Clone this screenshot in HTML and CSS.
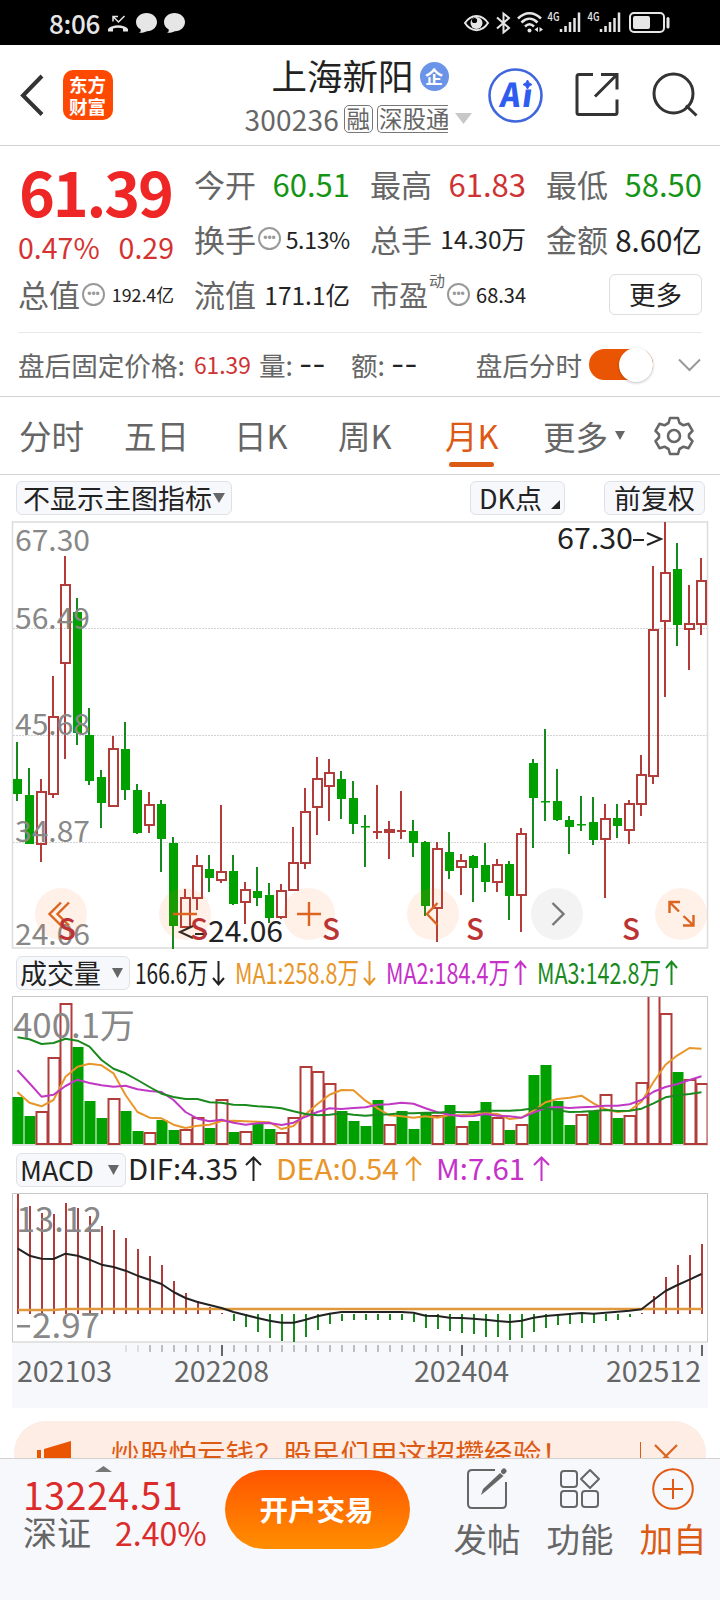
FILE: index.html
```html
<!DOCTYPE html>
<html lang="zh-CN">
	<head>
		<meta charset="utf-8">
		<meta name="viewport" content="width=device-width, initial-scale=1.0">
		<title>上海新阳 300236</title>
		<link rel="stylesheet" href="styles.css">
	</head>

	<body>
		<div class="status">
			<span class="clock">8:06</span>
			<svg class="st-left" width="80" height="24" viewBox="106 11 80 24">
				<path d="M108 31.500v-2.500c4-5 16-5 20 0v2.500h-5v-3c-3-1-7-1-10 0v3z" fill="#e6e6e6"/>
				<path d="M113 21.500v-5h5M113.500 17l5 5 6-6" fill="none" stroke="#e6e6e6" stroke-width="1.500"/>
				<path d="M146.500 13c6 0 10.500 4 10.500 9s-4 9-10 9.200c-2 .6-3.500 1.800-8 1.600 2-1 2-2 1.500-3.500-3-1.500-4.500-4.300-4.500-7.300 0-5 4.500-9 10.500-9z" fill="#e6e6e6"/>
				<path d="M174.500 13c6 0 10.500 4 10.500 9s-4 9-10 9.200c-2 .6-3.500 1.800-8 1.600 2-1 2-2 1.500-3.500-3-1.500-4.500-4.300-4.500-7.300 0-5 4.500-9 10.500-9z" fill="#e6e6e6"/>
			</svg>
			<svg class="st-right" width="208" height="32" viewBox="463 7 208 32">
				<g fill="none" stroke="#e6e6e6" stroke-width="2">
					<path d="M465 23c6-9.500 17-9.500 23 0-6 9.500-17 9.500-23 0z"/>
					<path d="M497 17.500l12 10.500-5.500 4.500V13.500l5.500 4.500-12 10.500"/>
					<path d="M518 18.500c7-7 16-7 23 0M521.500 22.500c5-5 11-5 16 0M525 26.500c3-3 6-3 9 0" stroke-width="2.500"/>
					<path d="M561 32v-3M565.500 32v-6M570 32v-10M574.500 32v-14M579 32V12.500M601 32v-3M605.500 32v-6M610 32v-10M614.500 32v-14M619 32V12.500" stroke-width="2.500"/>
					<rect x="630" y="13" width="34" height="19" rx="4"/>
					<path d="M668 18.500v8.500" stroke-width="3" stroke-linecap="round"/>
				</g>
				<circle cx="476.500" cy="23" r="6" fill="#e6e6e6"/>
				<circle cx="474.500" cy="20.500" r="2.600" fill="#000"/>
				<circle cx="529.500" cy="30.500" r="2" fill="#e6e6e6"/>
				<path d="M538 27v5l-3.500-2.500zM539.500 27v5l3.500-2.500z" fill="#e6e6e6"/>
				<rect x="633" y="16" width="17" height="13" rx="2" fill="#e6e6e6"/>
				<text class="net" x="547.500" y="20.500" textLength="12" lengthAdjust="spacingAndGlyphs">4G</text>
				<text class="net" x="587.500" y="20.500" textLength="12" lengthAdjust="spacingAndGlyphs">4G</text>
			</svg>
		</div>

		<header>
			<svg class="back" width="28" height="44" viewBox="0 0 28 44"><path d="M24 3L5 22.500l19 19" fill="none" stroke="#333" stroke-width="4"/></svg>
			<div class="logo"><span>东方</span><span>财富</span></div>
			<div class="title">
				<div class="name"><h1>上海新阳</h1><span class="corp">企</span></div>
				<div class="code">
					<span class="num">300236</span>
					<span class="tag">融</span>
					<span class="tag cut">深股通</span>
					<svg width="17" height="12" viewBox="0 0 17 12"><path d="M0 0h17l-8.500 11z" fill="#c8c8c8"/></svg>
				</div>
			</div>
			<svg class="ai" width="56" height="56" viewBox="488 67 56 56">
				<circle cx="515.500" cy="95.500" r="26" fill="#fff" stroke="#3f66dd" stroke-width="2.600"/>
				<g transform="translate(515 107) skewX(-8)">
					<text class="ai-text" x="-16" y="0" textLength="20" lengthAdjust="spacingAndGlyphs">A</text>
					<text class="ai-text" x="5.500" y="0" textLength="11" lengthAdjust="spacingAndGlyphs">ı</text>
				</g>
				<path d="M527.500 80q1 3.500 4.500 4.500-3.500 1-4.500 4.500-1-3.500-4.500-4.500 3.500-1 4.500-4.500z" fill="#2f5cf0" stroke="#2f5cf0"/>
			</svg>
			<svg class="share" width="46" height="46" viewBox="574 73 46 46" fill="none" stroke="#333" stroke-width="3">
				<path d="M593 75.500h-14q-2 0-2 2v36q0 2 2 2h36q2 0 2-2v-13"/>
				<path d="M601 75.500h16v15M616 76.500l-21 21"/>
			</svg>
			<svg class="search" width="48" height="48" viewBox="651 71 48 48" fill="none" stroke="#333" stroke-width="3">
				<circle cx="673.500" cy="93.500" r="19.500"/>
				<path d="M686 105.500l10.500 10"/>
			</svg>
		</header>

		<section class="quote">
			<div class="price">
				<b>61.39</b>
				<div><span>0.47%</span><span>0.29</span></div>
			</div>
			<div class="cell"><label>今开</label><span class="green v1">60.51</span></div>
			<div class="cell"><label>最高</label><span class="red v1">61.83</span></div>
			<div class="cell"><label>最低</label><span class="green v1">58.50</span></div>
			<div class="cell"><label>换手</label><i class="dots">•••</i><span class="v3">5.13%</span></div>
			<div class="cell"><label>总手</label><span class="v4">14.30万</span></div>
			<div class="cell"><label>金额</label><span class="v2">8.60亿</span></div>
			<div class="cell"><label>总值</label><i class="dots">•••</i><span class="v6">192.4亿</span></div>
			<div class="cell"><label>流值</label><span class="v4">171.1亿</span></div>
			<div class="cell pe"><label>市盈</label><sup>动</sup><i class="dots">•••</i><span class="v5">68.34</span></div>
			<div class="cell"><button class="more">更多</button></div>
		</section>

		<section class="after">
			<span>盘后固定价格:</span>
			<span class="red fixed">61.39</span>
			<span class="vol">量:</span><span class="dash">--</span>
			<span class="amt">额:</span><span class="dash">--</span>
			<span class="after-label">盘后分时</span>
			<span class="toggle"></span>
			<svg width="24" height="14" viewBox="0 0 24 14"><path d="M1 1.500l10.500 10.500L22 1.500" fill="none" stroke="#999" stroke-width="2"/></svg>
		</section>

		<nav>
			<a>分时</a>
			<a>五日</a>
			<a>日K</a>
			<a>周K</a>
			<a class="active">月K</a>
			<a class="menu">更多<svg width="10" height="10" viewBox="0 0 10 10"><path d="M0 0h10L5 9z" fill="#666"/></svg></a>
			<svg class="gear" width="42" height="42" viewBox="-21 -21 42 42" fill="none" stroke="#666" stroke-width="2.600" stroke-linejoin="round">
				<path d="M-4-18h8l1.500 5 4 2.300 5-1.500 4 7-3.500 3.700v3l3.500 3.700-4 7-5-1.500-4 2.300-1.500 5h-8l-1.500-5-4-2.300-5 1.500-4-7 3.500-3.700v-3l-3.500-3.700 4-7 5 1.500 4-2.300z"/>
				<circle r="6"/>
			</svg>
		</nav>

		<div class="tools">
			<span class="btn">不显示主图指标<svg width="12" height="10" viewBox="0 0 12 10"><path d="M0 0h12L6 10z" fill="#666"/></svg></span>
			<span class="btn dk">DK点<svg width="9" height="9" viewBox="0 0 9 9"><path d="M9 0v9H0z" fill="#222"/></svg></span>
			<span class="btn">前复权</span>
		</div>

		<svg class="chart" id="kline" width="698" height="430" viewBox="11 520 698 430"></svg>

		<div class="legend">
			<span class="btn">成交量<svg width="11" height="10" viewBox="0 0 11 10"><path d="M0 0h11L5.500 10z" fill="#666"/></svg></span>
			<svg width="570" height="44" viewBox="132 950 570 44">
				<g>
					<text x="135" y="983" textLength="73" lengthAdjust="spacingAndGlyphs" fill="#222">166.6万</text>
					<text x="235" y="983" textLength="124" lengthAdjust="spacingAndGlyphs" fill="#e8962a">MA1:258.8万</text>
					<text x="386" y="983" textLength="124" lengthAdjust="spacingAndGlyphs" fill="#c531c9">MA2:184.4万</text>
					<text x="537" y="983" textLength="124" lengthAdjust="spacingAndGlyphs" fill="#1a8a1e">MA3:142.8万</text>
				</g>
				<g fill="none" stroke-width="2">
					<path d="M218.500 960v23M213 977l5.500 6.500 5.500-6.500" stroke="#222"/>
					<path d="M369.500 960v23M364 977l5.500 6.500 5.500-6.500" stroke="#e8962a"/>
					<path d="M520.500 984v-23M515 967l5.500-6.500 5.500 6.500" stroke="#c531c9"/>
					<path d="M671.500 984v-23M666 967l5.500-6.500 5.500 6.500" stroke="#1a8a1e"/>
				</g>
			</svg>
		</div>

		<svg class="chart" id="volume" width="698" height="151" viewBox="11 995 698 151"></svg>

		<div class="legend macd-legend">
			<span class="btn">MACD<svg width="11" height="10" viewBox="0 0 11 10"><path d="M0 0h11L5.500 10z" fill="#666"/></svg></span>
			<svg width="570" height="44" viewBox="127 1147 570 44">
				<text x="128" y="1179" textLength="110" lengthAdjust="spacingAndGlyphs" fill="#222">DIF:4.35</text>
				<text x="276" y="1179" textLength="123" lengthAdjust="spacingAndGlyphs" fill="#e8962a">DEA:0.54</text>
				<text x="436" y="1179" textLength="89" lengthAdjust="spacingAndGlyphs" fill="#c531c9">M:7.61</text>
				<g fill="none" stroke-width="2">
					<path d="M253.500 1180v-23M246 1164l7.500-7.500 7.500 7.500" stroke="#222"/>
					<path d="M413.500 1180v-23M406 1164l7.500-7.500 7.500 7.500" stroke="#e8962a"/>
					<path d="M541.500 1180v-23M534 1164l7.500-7.500 7.500 7.500" stroke="#c531c9"/>
				</g>
			</svg>
		</div>

		<svg class="chart" id="macd" width="698" height="150" viewBox="11 1193 698 150"></svg>
		<svg class="axis" id="axis" width="696" height="65" viewBox="12 1343 696 65"></svg>

		<div class="banner">
			<svg class="horn" width="36" height="32" viewBox="0 0 36 32" fill="#ea5504"><path d="M0 9h4v14H0zM7 8L34 0v32L7 24z"/></svg>
			<p>炒股怕亏钱？股民们用这招攒经验！</p>
			<i></i>
			<svg class="close" width="24" height="24" viewBox="0 0 24 24"><path d="M1 1l22 22M23 1L1 23" stroke="#dd6420" stroke-width="2.200"/></svg>
		</div>

		<footer>
			<div class="index">
				<svg width="17" height="6" viewBox="0 0 17 6"><path d="M0 6l8.500-6L17 6z" fill="#777"/></svg>
				<strong>13224.51</strong>
				<div><span>深证</span><em>2.40%</em></div>
			</div>
			<button class="trade">开户交易</button>
			<a class="post">
				<svg width="42" height="42" viewBox="0 0 42 42" fill="none" stroke="#666" stroke-width="2">
					<path d="M29 2H6Q2 2 2 6v30q0 4 4 4h30q4 0 4-4V14"/>
					<path d="M15 27l2-6L34 5l3.500 3L20 23z" fill="#666" stroke="none"/>
					<path d="M37.500 3.500l.5-.5" stroke-width="5" stroke-linecap="round"/>
				</svg>
				发帖
			</a>
			<a>
				<svg width="42" height="42" viewBox="0 0 42 42" fill="none" stroke="#666" stroke-width="2">
					<rect x="2" y="3" width="16" height="16" rx="3"/>
					<rect x="2" y="23" width="16" height="16" rx="3"/>
					<rect x="23" y="23" width="16" height="16" rx="3"/>
					<path d="M31 2l9 9-9 9-9-9z" stroke-linejoin="round"/>
				</svg>
				功能
			</a>
			<a class="add">
				<svg width="42" height="42" viewBox="0 0 42 42" fill="none" stroke="#e05a14" stroke-width="2">
					<circle cx="21" cy="21" r="19.800"/>
					<path d="M11 21h20M21 11v20"/>
				</svg>
				加自
			</a>
		</footer>

		<script src="script.js"></script>
	</body>
</html>
```
FILE: styles.css
```css
*{
	box-sizing: border-box;
}
body{
	margin: 0;
	width: 720px;
	height: 1600px;
	overflow: hidden;
	display: flex;
	flex-direction: column;
	font-family: "Noto Sans CJK SC", "Noto Sans", sans-serif;
	background-color: white;
	color: #222;
}
svg{
	display: block;
	flex: none;
}
text{
	font-family: "Noto Sans CJK SC", sans-serif;
	font-size: 29px;
}
button{
	font-family: inherit;
	padding: 0;
}
.red{
	color: #cf3232;
}
.green{
	color: #149414;
}

.status{
	height: 45px;
	flex: none;
	display: flex;
	align-items: center;
	background-color: black;
	color: #e6e6e6;
}
.clock{
	width: 57px;
	margin-left: 49px;
	font-size: 26px;
	font-weight: 500;
	line-height: 45px;
	letter-spacing: -.3px;
}
.st-right{
	margin-left: auto;
	margin-right: 49px;
}
.net{
	font-size: 12px;
	font-weight: 500;
	fill: #e6e6e6;
}

header{
	height: 101px;
	flex: none;
	display: flex;
	align-items: center;
	border-bottom: 1px solid #d2d2d2;
}
.back{
	margin-left: 18px;
}
.logo{
	width: 50px;
	height: 50px;
	margin-left: 16.500px;
	display: flex;
	flex-direction: column;
	justify-content: center;
	align-items: center;
	border-radius: 10px;
	background-color: #ff4800;
	color: white;
	font-size: 18.500px;
	font-weight: bold;
	line-height: 22px;
}
.title{
	width: 240px;
	margin-top: -4px;
	margin-left: 132px;
}
.name{
	display: flex;
	align-items: center;
	height: 52px;
	margin-left: 27px;
}
h1{
	margin: 0;
	font-size: 35.500px;
	font-weight: 400;
	line-height: 50px;
}
.corp{
	width: 29px;
	height: 29px;
	margin-top: 4px;
	margin-left: 6px;
	border-radius: 50%;
	background-color: #6b93e8;
	color: white;
	font-size: 18px;
	font-weight: bold;
	line-height: 28px;
	text-align: center;
}
.code{
	height: 37px;
	display: flex;
	align-items: center;
	color: #666;
}
.code .num{
	width: 99px;
	font-size: 28px;
	line-height: 36px;
	letter-spacing: .2px;
}
.tag{
	height: 28px;
	padding: 0 2px;
	margin-right: 4px;
	border: 1px solid #777;
	border-radius: 5px;
	font-size: 23.500px;
	line-height: 25px;
}
.cut{
	width: 71px;
	padding-left: 1px;
	overflow: hidden;
	white-space: nowrap;
	border-right: 0;
	border-radius: 5px 0 0 5px;
}
.code svg{
	margin-left: 3px;
}
.ai{
	margin-left: 3px;
}
.ai-text{
	font-size: 33px;
	font-weight: 900;
	fill: #2f5cf0;
}
.share{
	margin-left: 30px;
}
.search{
	margin-left: 31px;
}

.quote{
	height: 187px;
	flex: none;
	margin: 0 18px;
	padding-top: 10px;
	display: grid;
	grid-template-columns: repeat(4, minmax(0, 1fr));
	grid-template-rows: 55px 55px 56px;
	column-gap: 20px;
	border-bottom: 1px solid #e8e8e8;
}
.price{
	grid-row: span 2;
	color: #d53232;
}
.price b{
	display: block;
	margin-left: 1px;
	height: 70px;
	color: #ee2626;
	font-size: 61px;
	line-height: 69px;
	letter-spacing: -2.200px;
}
.price div{
	display: flex;
	justify-content: space-between;
	font-size: 28.500px;
	line-height: 42px;
}
.cell{
	display: flex;
	align-items: center;
	justify-content: space-between;
	white-space: nowrap;
}
.cell label{
	color: #666;
	font-size: 31px;
	line-height: 50px;
}
.dots{
	width: 23px;
	height: 23px;
	margin-left: 2px;
	margin-right: auto;
	border: 2px solid #999;
	border-radius: 50%;
	color: #999;
	font: 12px/19px "Liberation Sans", sans-serif;
	text-align: center;
}
.v1{
	font-size: 31px;
}
.v2{
	font-size: 29.500px;
}
.v3{
	font-size: 23px;
	letter-spacing: -.3px;
}
.v4{
	font-size: 24.500px;
}
.v5{
	font-size: 20px;
}
.v6{
	font-size: 17.800px;
}
.pe label{
	font-size: 29px;
}
.pe sup{
	align-self: flex-start;
	margin-left: 1px;
	font-size: 16px;
	line-height: 28px;
	color: #666;
}
.more{
	width: 93px;
	height: 41px;
	margin-left: auto;
	border: 1px solid #ddd;
	border-radius: 6px;
	background-color: white;
	color: #222;
	font-size: 26.500px;
	line-height: 36px;
}

.after{
	height: 64px;
	flex: none;
	padding: 0 18px;
	display: flex;
	align-items: center;
	border-bottom: 1px solid #d2d2d2;
	color: #666;
	font-size: 26.600px;
	white-space: nowrap;
}
.fixed{
	margin-left: 9px;
	font-size: 22.800px;
}
.vol{
	margin-left: 8px;
}
.amt{
	margin-left: 20px;
}
.dash{
	width: 32px;
	margin-left: 6px;
	color: #222;
	font-family: Inter, sans-serif;
	font-size: 29px;
	line-height: 30px;
}
.after-label{
	margin-left: auto;
}
.toggle{
	width: 64px;
	height: 31px;
	margin-left: 7px;
	margin-right: 25px;
	border-radius: 16px;
	display: flex;
	align-items: center;
	justify-content: flex-end;
	background-color: #ea5504;
}
.toggle::after{
	content: "";
	width: 34px;
	height: 34px;
	flex: none;
	border-radius: 50%;
	background-color: white;
	box-shadow: 0 1px 3px rgba(0, 0, 0, .25);
}

nav{
	height: 78px;
	flex: none;
	padding: 0 24px 0 19px;
	display: flex;
	align-items: center;
	border-bottom: 1px solid #d2d2d2;
	color: #666;
	font-size: 32.500px;
}
nav a{
	width: 105px;
	height: 77px;
	line-height: 76px;
}
nav a:nth-child(2){
	width: 110px;
}
nav a:nth-child(3){
	width: 104px;
}
nav .active{
	width: 98px;
	color: #dd5a14;
}
nav a:nth-child(4){
	width: 107px;
}
.active::after{
	content: "";
	display: block;
	width: 45px;
	height: 5px;
	margin-top: -11px;
	margin-left: 4px;
	border-radius: 3px;
	background-color: #dd5a14;
}
nav .menu{
	display: flex;
	align-items: center;
	gap: 7px;
}
.gear{
	margin-left: auto;
	margin-right: 1px;
}

.tools{
	height: 45px;
	flex: none;
	padding: 6px 15px 0 16px;
	display: flex;
	align-items: flex-start;
}
.btn{
	height: 34px;
	padding: 0 6px;
	display: flex;
	align-items: center;
	gap: 2px;
	border: 1px solid #dfe1e6;
	border-radius: 6px;
	background-color: #f7f8fb;
	font-size: 27px;
	line-height: 32px;
	white-space: nowrap;
}
.tools .btn{
	padding-left: 6px;
	padding-right: 6px;
	gap: 1px;
}
.tools .btn:last-child{
	margin-left: 39px;
	padding: 0 9px;
}
.tools .dk{
	margin-left: auto;
	padding-left: 8px;
	padding-right: 4px;
	gap: 9px;
}
.dk svg{
	align-self: flex-end;
	margin-bottom: 5px;
}

.chart{
	margin-left: 11px;
}
.legend{
	height: 45px;
	padding-left: 16px;
	display: flex;
	flex: none;
	align-items: center;
}
.legend .btn{
	width: 114px;
	margin-right: 2px;
	padding: 0 6px 0 3px;
	justify-content: space-between;
}
.macd-legend{
	height: 47px;
}
.macd-legend .btn{
	width: 110px;
	margin-right: 1px;
}
.axis{
	margin-left: 12px;
	background-color: #f7f8fb;
}
.scale{
	fill: #888;
}
.signal{
	font-size: 30px;
	font-weight: 500;
	fill: #bb3333;
}
.date{
	font-size: 28px;
	fill: #666;
}

.banner{
	height: 37px;
	flex: none;
	margin: 13px 14px 0;
	padding: 0 28px 0 23px;
	display: flex;
	align-items: flex-start;
	overflow: hidden;
	border-radius: 32px 32px 0 0;
	background-color: #fdede4;
}
.banner p{
	margin: 9px 0 0 38px;
	color: #dd5a14;
	font-size: 28.500px;
	line-height: 45px;
	letter-spacing: .2px;
	white-space: nowrap;
}
.horn{
	margin-top: 20px;
}
.banner i{
	width: 1px;
	height: 30px;
	margin: 21px 13px 0 auto;
	background-color: #dd5a14;
}
.close{
	margin-top: 23px;
}

footer{
	height: 142px;
	flex: none;
	display: flex;
	align-items: flex-start;
	border-top: 1px solid #d2d2d2;
	background-color: #f7f8fb;
}
.index{
	width: 225px;
	padding: 7px 0 0 23px;
}
.index svg{
	margin-left: 72px;
}
.index strong{
	display: block;
	color: #dc2b2b;
	font-size: 37.500px;
	font-weight: 400;
	line-height: 44px;
	letter-spacing: .5px;
}
.index div{
	display: flex;
	align-items: center;
	margin-top: -1px;
	color: #666;
	font-size: 34px;
	line-height: 34px;
}
.index em{
	margin-left: 24px;
	color: #dc2b2b;
	font-size: 32px;
	font-style: normal;
}
.trade{
	width: 185px;
	height: 79px;
	margin-top: 11px;
	margin-right: 43px;
	padding: 0 2px 2px 0;
	border: 0;
	border-radius: 40px;
	background: linear-gradient(#ff5500, #ff8e00);
	color: white;
	font-size: 28.500px;
	font-weight: bold;
}
footer a{
	width: 68px;
	margin-top: 9px;
	margin-right: 25px;
	display: flex;
	flex-direction: column;
	align-items: center;
	color: #666;
	font-size: 33.500px;
	line-height: 55px;
	white-space: nowrap;
}
footer .add{
	margin-right: 0;
	color: #dd5a14;
}
```
FILE: script.js
```js
const RED = "#b23c3a";
const GREEN = "#00a000";
const STEP = 12;

// [direction, high, body top, body bottom, low]
const candles = [
	["g",742,779,794,801],["g",768,795,844,844],["r",779,791,844,862],["r",676,716,794,798],
	["r",556,584,663,759],["g",598,612,733,745],["g",708,735,781,785],["g",770,777,803,828],
	["r",736,748,806,807],["g",722,749,790,800],["g",784,790,833,834],["r",792,804,825,833],
	["g",800,804,839,872],["g",837,843,926,949],["r",889,897,927,928],["r",855,865,898,910],
	["g",855,869,878,892],["r",805,871,880,883],["g",855,871,904,905],["r",882,889,902,924],
	["g",867,891,898,906],["g",883,895,918,923],["r",884,890,917,919],["r",827,862,890,891],
	["r",788,811,863,869],["r",757,778,807,835],["r",759,772,786,821],["g",771,779,799,819],
	["g",781,798,824,834],["g",815,826,827,867],["r",785,831,833,839],["r",821,829,832,859],
	["r",791,830,831,839],["g",820,831,843,857],["g",841,842,906,916],["r",842,848,908,942],
	["g",832,852,871,879],["r",854,860,867,895],["g",855,856,868,902],["g",843,865,882,892],
	["r",859,864,882,892],["g",861,864,896,920],["r",828,833,895,932],["g",759,763,798,848],
	["g",729,801,802,821],["g",769,801,820,821],["g",816,820,827,854],["g",796,824,825,831],
	["g",797,822,840,845],["r",804,818,839,898],["g",804,818,826,838],["r",800,803,830,844],
	["r",755,774,804,816],["r",566,629,776,784],["r",522,572,621,697],["g",543,569,625,646],
	["r",585,623,629,670],["r",558,580,624,635]
];

// tops of the volume bars
const volumes = [
	1097,1116,1111,1057,1003,1047,1101,1118,1098,1111,1131,1132,1120,1130,1129,1117,1128,1099,1132,
	1131,1124,1129,1132,1117,1066,1071,1083,1111,1121,1126,1100,1124,1111,1129,1113,1115,1105,1126,
	1121,1102,1117,1130,1124,1075,1065,1101,1125,1114,1111,1094,1118,1115,1082,980,1013,1072,1079,1083
];
// bars whose colour differs from their candle
const volumeColor = {30: "g", 32: "g", 47: "r"};

// line points are stored in thirds of a pixel
const ma1 = [
	427,458,469,450,380,350,341,346,370,435,486,503,505,524,534,527,524,513,512,514,515,517,537,528,
	493,462,434,420,421,452,475,496,499,503,499,503,495,496,492,490,492,507,503,482,457,447,443,437,
	460,478,486,482,455,396,344,316,294,296
];
const ma2 = [
	361,400,440,434,408,389,399,406,410,407,418,423,426,450,486,506,514,509,518,524,520,519,525,518,
	500,486,475,477,474,472,464,463,458,461,475,487,494,499,498,492,497,499,503,488,474,471,474,472,
	470,467,467,463,450,425,411,402,390,379
];
const ma3 = [
	262,268,282,279,266,272,290,330,356,370,390,411,431,441,447,447,457,458,464,465,469,471,475,484,
	492,496,494,490,494,497,494,493,490,490,488,488,485,487,487,482,482,482,480,475,474,481,486,485,
	483,480,483,482,476,460,442,436,432,427
];
const dif = [
	205,227,236,237,221,227,239,254,261,272,287,299,312,336,354,366,375,384,396,405,414,422,428,428,
	419,409,401,396,396,396,396,396,396,398,407,408,413,414,416,419,423,426,422,413,408,405,402,399,
	401,398,395,392,388,360,333,315,299,282
];

// ends of the MACD sticks, zero is at 1314
const sticks = [
	1194,1206,1213,1214,1203,1208,1216,1226,1230,1238,1249,1256,1265,1281,1293,1301,1307,1313,1321,
	1327,1332,1338,1341,1342,1337,1330,1324,1321,1320,1320,1320,1320,1320,1322,1328,1329,1331,1333,
	1334,1337,1337,1340,1338,1332,1328,1325,1324,1323,1323,1321,1320,1317,1313,1296,1277,1265,1255,1244
];

function rect(x, y, w, h, fill, stroke){
	return `<rect x="${x}" y="${y}" width="${w}" height="${h}" fill="${fill}" stroke="${stroke || "none"}" stroke-width="2"/>`;
}

function line(x1, y1, x2, y2, color, width){
	return `<path d="M${x1} ${y1}L${x2} ${y2}" stroke="${color}" stroke-width="${width}"/>`;
}

function text(x, y, length, cls, str, style){
	return `<text class="${cls}" x="${x}" y="${y}" textLength="${length}" lengthAdjust="spacingAndGlyphs" ${style || ""}>${str}</text>`;
}

function curve(points, top, color){
	const list = points.map((v, i)=>(17.5 + i*STEP) + "," + (top + v/3).toFixed(1)).join(" ");
	return `<polyline points="${list}" fill="none" stroke="${color}" stroke-width="2" stroke-linejoin="round"/>`;
}

function drawKline(){
	let out = `<rect x="12.5" y="522" width="695" height="426" fill="none" stroke="#dedede" stroke-width="1.6"/>`;
	[628.5, 735.5, 842.5].forEach(y=>{
		out += `<path d="M13 ${y}H707" stroke="#d2d2d2" stroke-dasharray="2 1"/>`;
	});
	candles.forEach(([dir, high, top, bottom, low], i)=>{
		const x = 17 + i*STEP;
		if(dir == "g"){
			out += line(x, high, x, low, "#168a1c", 2);
			out += rect(x - 4, top, 9, Math.max(bottom - top, 1.5), GREEN);
		}else{
			out += line(x, high, x, top, RED, 2) + line(x, bottom, x, low, RED, 2);
			if(bottom - top < 3){
				out += rect(x - 4, top, 9, 2, RED);
			}else{
				out += rect(x - 4, top + 1, 9, bottom - top - 1, "none", RED);
			}
		}
	});
	out += text(15, 550.5, 75, "scale", "67.30");
	out += text(15, 628.5, 75, "scale", "56.49");
	out += text(15, 735, 75, "scale", "45.68");
	out += text(15, 842, 75, "scale", "34.87");
	out += text(15, 944.5, 75, "scale", "24.06");
	out += text(557, 549, 76, "", "67.30", 'fill="#222"');
	out += `<path d="M633 540h11M647 533l14 6-14 6" fill="none" stroke="#222" stroke-width="2"/>`;
	out += text(208, 942, 75, "", "24.06", 'fill="#222"');
	out += `<path d="M195 934h12M193 926l-13 6 13 6" fill="none" stroke="#222" stroke-width="2"/>`;
	[61, 185, 309, 433, 681].forEach(x=>{
		out += `<circle cx="${x}" cy="914" r="26" fill="#fb6a20" fill-opacity=".1"/>`;
	});
	out += `<circle cx="557" cy="914" r="26" fill="#f3f3f3"/>`;
	out += `<g fill="none" stroke="#dc641e" stroke-width="2.4">
		<path d="M61 902.500L49.500 914 61 925.500M69 902.500L57.500 914 69 925.500"/>
		<path d="M173 914h24M297 914h24M309 902v24"/>
		<path d="M437.500 903L427 914l10.500 11"/>
		<path d="M669.500 913v-11H680M670 902.500l9 9M683 925.500h10.500V915M693 925l-9.500-9"/>
		<path d="M552.500 903l11 11-11 11" stroke="#777"/>
	</g>`;
	[58, 190, 322, 466, 622].forEach(x=>{
		out += text(x, 940, 18, "signal", "S");
	});
	document.querySelector("#kline").innerHTML = out;
}

function drawVolume(){
	let out = `<rect x="12.5" y="996.5" width="695" height="148.500" fill="none" stroke="#c8c8c8"/>`;
	out += `<clipPath id="clip"><rect x="12" y="997" width="695.500" height="149"/></clipPath><g clip-path="url(#clip)">`;
	volumes.forEach((top, i)=>{
		const x = 12 + i*STEP;
		const dir = volumeColor[i] || candles[i][0];
		if(dir == "g"){
			out += rect(x + .5, top, 11, 1144 - top, GREEN);
		}else{
			out += rect(x + .5, top + 1, 11, 1143 - top, "white", RED);
		}
	});
	out += "</g>";
	out += curve(ma1, 950, "#e8962a") + curve(ma2, 950, "#c038c4") + curve(ma3, 950, "#1a8a1e");
	out += text(13, 1038, 122, "scale", "400.1万", 'style="font-size:34px"');
	document.querySelector("#volume").innerHTML = out;
}

function drawMacd(){
	let out = `<rect x="12.5" y="1193.5" width="695" height="148.500" fill="none" stroke="#c8c8c8"/>`;
	sticks.forEach((end, i)=>{
		const x = 18 + i*STEP;
		out += line(x, 1314, x, end, end > 1314 ? "#168a1c" : RED, 2);
	});
	out += `<path d="M18 1310h36l12-1H702" fill="none" stroke="#e0983c" stroke-width="2.4"/>`;
	out += curve(dif, 1180, "#222");
	out += text(16, 1231.5, 86, "scale", "13.12", 'style="font-size:34px"');
	out += rect(17, 1325, 13, 2.5, "#888") + text(32, 1338, 68, "scale", "2.97", 'style="font-size:34px"');
	document.querySelector("#macd").innerHTML = out;
}

function drawAxis(){
	let out = "";
	for(let i=9; i<58; i++){
		const x = 18 + i*STEP;
		if((i - 17) % 20 == 0){
			out += line(x, 1345, x, 1356, "#666", 2);
		}else{
			out += line(x, 1345, x, 1352, i < 11 ? "#d8d8d8" : "#aaa", 1.500);
		}
	}
	out += text(17, 1381.5, 95, "date", "202103");
	out += text(174, 1381.5, 95, "date", "202208");
	out += text(414, 1381.5, 95, "date", "202404");
	out += text(606, 1381.5, 95, "date", "202512");
	document.querySelector("#axis").innerHTML = out;
}

drawKline();
drawVolume();
drawMacd();
drawAxis();
```
